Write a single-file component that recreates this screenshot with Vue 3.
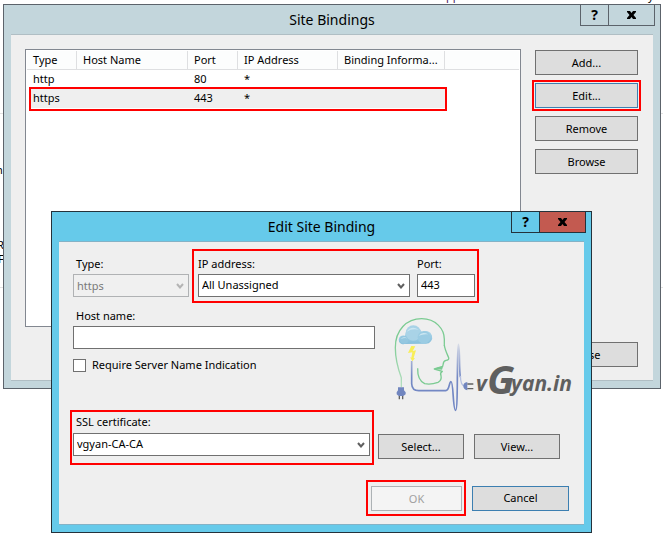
<script setup>
import { ref } from 'vue'

const columns = ['Type', 'Host Name', 'Port', 'IP Address', 'Binding Informa...']
const bindings = [
  { type: 'http', host: '', port: '80', ip: '*', info: '' },
  { type: 'https', host: '', port: '443', ip: '*', info: '' }
]
const selected = ref(1)
const hostName = ref('')
const port = ref('443')
const requireSni = ref(false)
</script>

<template>
  <main class="desktop">
    <div class="backdrop" aria-hidden="true">
      <span class="scrap scrap-top">App</span>
      <span class="scrap scrap-end">y</span>
      <span class="scrap scrap-n">n</span>
      <span class="scrap scrap-r">R</span>
      <span class="scrap scrap-f">F</span>
      <i class="rule rule-upper"></i>
      <i class="rule rule-lower"></i>
    </div>

    <section class="window bindings" aria-label="Site Bindings">
      <header class="titlebar">
        <h1>Site Bindings</h1>
        <div class="caption">
          <button type="button" class="help" aria-label="Help">?</button>
          <button type="button" class="close" aria-label="Close">
            <svg width="9" height="8" viewBox="0 0 9 8"><path d="M0 0h3l1.5 2L6 0h3v1L6.500 4L9 7v1H6L4.500 6L3 8H0V7l2.500-3L0 1z" /></svg>
          </button>
        </div>
      </header>
      <div class="client">
        <div class="body">
          <div class="list">
            <table>
              <colgroup>
                <col class="c-type" /><col class="c-host" /><col class="c-port" /><col class="c-ip" /><col class="c-info" /><col />
              </colgroup>
              <thead>
                <tr>
                  <th v-for="c in columns" :key="c" scope="col">{{ c }}</th>
                  <td></td>
                </tr>
              </thead>
              <tbody>
                <tr v-for="(b, i) in bindings" :key="b.type" :class="{ selected: i === selected }" @click="selected = i">
                  <td>{{ b.type }}</td>
                  <td>{{ b.host }}</td>
                  <td>{{ b.port }}</td>
                  <td>{{ b.ip }}</td>
                  <td>{{ b.info }}</td>
                  <td></td>
                </tr>
              </tbody>
            </table>
          </div>
          <div class="actions">
            <button type="button" class="btn">Add...</button>
            <button type="button" class="btn focus ringed">Edit...</button>
            <button type="button" class="btn">Remove</button>
            <button type="button" class="btn">Browse</button>
          </div>
        </div>
        <footer class="closing"><button type="button" class="btn">Close</button></footer>
      </div>
    </section>

    <section class="window editor" aria-label="Edit Site Binding">
      <header class="titlebar">
        <h1>Edit Site Binding</h1>
        <div class="caption">
          <button type="button" class="help" aria-label="Help">?</button>
          <button type="button" class="close" aria-label="Close">
            <svg width="9" height="8" viewBox="0 0 9 8"><path d="M0 0h3l1.5 2L6 0h3v1L6.500 4L9 7v1H6L4.500 6L3 8H0V7l2.500-3L0 1z" /></svg>
          </button>
        </div>
      </header>
      <form class="client" @submit.prevent>
        <div class="row">
          <div class="field type">
            <label class="indent" for="type">Type:</label>
            <div class="combo disabled">
              <select id="type" disabled><option>https</option></select>
              <svg width="8" height="6" viewBox="0 0 8 6"><path d="M1 1L4 4.500L7 1" /></svg>
            </div>
          </div>
          <div class="mark address">
            <div class="field grow">
              <label for="ip">IP address:</label>
              <div class="combo">
                <select id="ip"><option>All Unassigned</option></select>
                <svg width="8" height="6" viewBox="0 0 8 6"><path d="M1 1L4 4.500L7 1" /></svg>
              </div>
            </div>
            <div class="field port">
              <label for="port">Port:</label>
              <input id="port" v-model="port" type="text" />
            </div>
          </div>
        </div>

        <div class="row middle">
          <div class="host">
            <div class="field">
              <label class="indent" for="host">Host name:</label>
              <input id="host" v-model="hostName" type="text" />
            </div>
            <div class="check">
              <input id="sni" v-model="requireSni" type="checkbox" />
              <label for="sni">Require Server Name Indication</label>
            </div>
          </div>
          <svg class="logo" width="182" height="94" viewBox="395 316 182 94" role="img" aria-label="vGyan.in">
            <defs>
              <linearGradient id="cloud" x1="0" y1="0" x2="0" y2="1">
                <stop offset="0" stop-color="#b5dbec" />
                <stop offset="1" stop-color="#86bfdc" />
              </linearGradient>
              <linearGradient id="wire" x1="0" y1="0" x2="0" y2="1">
                <stop offset="0" stop-color="#7388c4" stop-opacity=".2" />
                <stop offset=".5" stop-color="#7388c4" />
              </linearGradient>
              <linearGradient id="head" x1="0" y1="0" x2="0" y2="1">
                <stop offset=".3" stop-color="#7bcb92" />
                <stop offset="1" stop-color="#b4dec0" />
              </linearGradient>
            </defs>
            <g transform="translate(380 305) scale(.33333)" fill="none" stroke-linejoin="round">
              <path d="M64 246V218C50 180 46 155 46 128C46 75 80 41 125 41C167 41 193 72 193 103V122" stroke="url(#head)" stroke-width="4" />
              <path d="M193 120C194 132 199 142 206 158Q208 165 198 166Q190 168 190 176L188 184L163 192L187 199Q179 204 183 212Q186 226 174 232Q152 240 134 236Q112 226 113 190" stroke="#7bcb92" stroke-width="4" />
              <path d="M163 192Q176 184 189 185L186 194Z" fill="#7bcb92" />
              <path d="M95 168V236Q96 257 116 257H197C209 256 207 230 213 230C221 230 218 316 227 316C235 316 230 118 235 118C240 118 237 190 241 216" stroke="url(#wire)" stroke-width="5" />
              <path d="M241 212Q242 242 254 243" stroke="#b4bfe0" stroke-width="4" />
              <path d="M73 117A13 13 0 1 1 75 93A27 27 0 0 1 126 82A19 19 0 1 1 137 116Z" fill="url(#cloud)" />
              <circle cx="73" cy="104" r="12" fill="#94c7e0" />
              <circle cx="100" cy="84" r="23" fill="#a9d3e7" />
              <circle cx="132" cy="97" r="19" fill="#9bcce3" />
              <path d="M80 80Q94 60 116 74Q96 70 80 80M116 92Q126 78 145 88Q130 86 116 92M62 102Q70 92 82 100Q72 98 62 102" fill="#cce7f2" />
              <path d="M94 123L84 144L97 142L94 158L90 157L97 169L105 160L101 159L108 136L98 138L106 124Z" fill="#f8ee58" />
              <path d="M54 247H72V256L77 262V268L70 273H56L50 268V262L54 256Z" fill="#7186bf" />
              <path d="M58 273V283M68 273V283" stroke="#626262" stroke-width="4" />
              <path d="M262 231V256Q250 253 250 243Q250 233 262 231Z" fill="#7186bf" />
              <path d="M262 237H280M262 251H280" stroke="#626262" stroke-width="4" />
            </g>
            <g class="wordmark">
              <text class="small" x="476" y="391">v</text>
              <text class="big" x="487" y="394">G</text>
              <text class="small" x="511" y="391">yan.in</text>
            </g>
          </svg>
        </div>

        <div class="row">
          <div class="mark certificate">
            <div class="field grow">
              <label class="indent" for="ssl">SSL certificate:</label>
              <div class="combo">
                <select id="ssl"><option>vgyan-CA-CA</option></select>
                <svg width="8" height="6" viewBox="0 0 8 6"><path d="M1 1L4 4.500L7 1" /></svg>
              </div>
            </div>
          </div>
          <div class="cert-actions">
            <button type="button" class="btn">Select...</button>
            <button type="button" class="btn">View...</button>
          </div>
        </div>

        <footer class="decision">
          <div class="mark confirm"><button type="submit" class="btn" disabled>OK</button></div>
          <button type="button" class="btn focus cancel">Cancel</button>
        </footer>
      </form>
    </section>
  </main>
</template>

<style>
body {
  background: #fff;
}
</style>

<style scoped>
* {
  box-sizing: border-box;
}
.desktop {
  position: relative;
  min-height: 100vh;
  padding: 4px 2px 0 3px;
  overflow: hidden;
  font: 11px/16px "Noto Sans", "Open Sans", sans-serif;
  color: #000;
}
button,
input,
select {
  margin: 0;
  font: inherit;
  color: inherit;
  border-radius: 0;
}
.backdrop {
  position: absolute;
  inset: 0;
}
.scrap {
  position: absolute;
}
.scrap-top {
  left: 439px;
  top: -12px;
  color: #4a2060;
}
.scrap-end {
  left: 648px;
  top: -12px;
}
.scrap-n {
  left: -4px;
  top: 162px;
}
.scrap-r {
  left: -3px;
  top: 237px;
}
.scrap-f {
  left: -2px;
  top: 251px;
}
.rule {
  position: absolute;
  left: 0;
  right: 0;
  height: 1px;
  background: #e2e2e2;
}
.rule-upper {
  top: 113px;
}
.rule-lower {
  top: 287px;
}

.window {
  border: 1px solid #5c636b;
}
.bindings {
  position: relative;
  background: #c3d6dc;
}
.editor {
  position: absolute;
  left: 51px;
  right: 71px;
  top: 211px;
  background: #66caea;
  border-color: #24323b;
}
.titlebar {
  position: relative;
  display: flex;
  align-items: center;
  justify-content: center;
  height: 29px;
}
h1 {
  margin: 0;
  font-size: 14px;
  line-height: 20px;
  font-weight: 400;
}
.caption {
  position: absolute;
  top: -1px;
  right: 5px;
  display: flex;
}
.caption button {
  display: grid;
  place-items: center;
  height: 22px;
  padding: 0;
  border: 1px solid #5c636b;
  background: transparent;
}
.help {
  width: 29px;
  font-size: 14px;
  font-weight: 700;
}
.close {
  width: 47px;
}
.caption .help {
  font-size: 14px;
  font-weight: 700;
}
.caption .close {
  margin-left: -1px;
}
.editor .caption button {
  border-color: #24323b;
}
.editor .caption .close {
  background: #c35a50;
}
.client {
  margin: 0 7px 7px;
  background: #efefef;
  border-top: 1px solid #b0bec4;
  border-bottom: 1px solid #b0bec4;
}
.bindings .client {
  padding: 14px 15px 13px 14px;
}
.editor .client {
  padding: 7px 15px 8px 14px;
  border-color: #84b2c6;
}
.body {
  display: flex;
  gap: 14px;
}
.list {
  flex: 1;
  height: 278px;
  padding: 1px;
  background: #fff;
  border: 1px solid #828790;
}
table {
  width: 100%;
  table-layout: fixed;
  border-collapse: separate;
  border-spacing: 0;
}
.c-type,
.c-port {
  width: 50px;
}
.c-host {
  width: 111px;
}
.c-ip {
  width: 100px;
}
.c-info {
  width: 107px;
}
th,
td {
  height: 19px;
  padding: 0 0 0 6px;
  line-height: 18px;
  font-weight: 400;
  text-align: left;
  white-space: nowrap;
}
thead th,
thead td {
  background: #fcfdfd;
  border-bottom: 1px solid #dedfe1;
}
thead th {
  border-right: 1px solid #dedfe1;
}
tbody td {
  padding-bottom: 2px;
  line-height: 16px;
}
tbody td:first-child {
  position: relative;
  padding-left: 3px;
  border-left: 3px solid #fff;
}
.selected td:not(:last-child) {
  background: #efefef;
}
.selected td:first-child::after {
  content: "";
  box-sizing: border-box;
  position: absolute;
  z-index: 1;
  left: -1px;
  top: -2px;
  width: 418px;
  height: 24px;
  border: 2px solid #f00;
}
.actions {
  display: flex;
  flex-direction: column;
  gap: 8px;
  width: 103px;
  padding-top: 1px;
}
.btn {
  height: 25px;
  padding: 0;
  background: #dddddd;
  border: 1px solid #707070;
}
.btn.focus {
  border-color: #3c7fb1;
}
.btn:disabled {
  color: #a0a0a0;
  background: #f4f4f4;
  border-color: #adb2b5;
}
.ringed {
  outline: 2px solid #f00;
  outline-offset: 1px;
}
.closing {
  display: flex;
  justify-content: flex-end;
  margin-top: 15px;
}
.closing .btn {
  width: 103px;
}

.row {
  display: flex;
  align-items: flex-start;
}
.mark {
  border: 2px solid #f00;
}
.field {
  display: flex;
  flex-direction: column;
  gap: 2px;
}
.grow {
  flex: 1;
}
.indent {
  padding-left: 3px;
}
.type {
  width: 116px;
  margin-right: 3px;
  padding-top: 7px;
}
.address {
  display: flex;
  gap: 7px;
  width: 287px;
  padding: 5px 2px 4px 4px;
}
.port {
  width: 58px;
}
input[type="text"],
select {
  width: 100%;
  height: 23px;
  padding: 0 3px 2px;
  background: #fff;
  border: 1px solid #707070;
  outline: none;
}
select {
  appearance: none;
}
.combo {
  display: grid;
  align-items: center;
}
.combo > * {
  grid-area: 1 / 1;
}
.combo svg {
  justify-self: end;
  margin-right: 5px;
  fill: none;
  stroke: #606060;
  stroke-width: 2px;
  pointer-events: none;
}
.combo.disabled select {
  padding-bottom: 0;
  color: #7a7a7a;
  background: #f0f0f0;
  border-color: #b0b2b4;
  opacity: 1;
}
.combo.disabled svg {
  stroke: #b4b4b4;
}
.middle {
  gap: 20px;
  height: 107px;
}
.host {
  flex: none;
  width: 302px;
  padding-top: 5px;
}
.check {
  display: flex;
  align-items: center;
  gap: 6px;
  margin-top: 8px;
}
.check input {
  appearance: none;
  width: 13px;
  height: 13px;
  background: #fff;
  border: 1px solid #707070;
}
.check input:checked {
  background: #707070;
}
.logo {
  flex: none;
  margin-top: 13px;
  overflow: visible;
}
.wordmark {
  fill: #5f5f5f;
  font-weight: 700;
  font-style: italic;
}
.small {
  font-family: "Open Sans", sans-serif;
  font-size: 21px;
}
.big {
  font-family: "Liberation Sans Narrow", "Open Sans", sans-serif;
  font-size: 40px;
}
.certificate {
  display: flex;
  width: 304px;
  margin-left: -3px;
  padding: 2px 2px 7px 1px;
}
.certificate .field {
  gap: 3px;
}
.cert-actions {
  display: flex;
  gap: 10px;
  margin: 24px 0 0 4px;
}
.cert-actions .btn {
  width: 86px;
}
.decision {
  display: flex;
  justify-content: flex-end;
  align-items: center;
  gap: 6px;
  margin-top: 15px;
}
.confirm {
  display: flex;
  padding: 4px 2px 3px 3px;
}
.confirm .btn {
  width: 91px;
}
.cancel {
  width: 97px;
}
</style>
